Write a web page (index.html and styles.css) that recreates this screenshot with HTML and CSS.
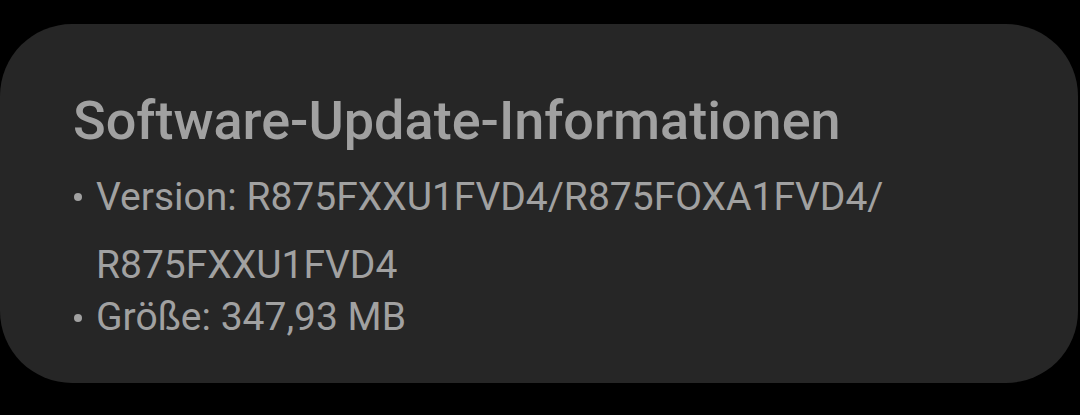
FILE: index.html
```html
<!DOCTYPE html>
<html lang="de">
<head>
  <meta charset="UTF-8">
  <meta name="viewport" content="width=device-width, initial-scale=1.0">
  <link rel="stylesheet" href="styles.css">
  <title>Software-Update</title>
</head>
<body>
  <div class="card">
    <h1 class="title">Software-Update-Informationen</h1>
    <ul class="info">
      <li class="item item-version">Version: R875FXXU1FVD4/R875FOXA1FVD4/<br>R875FXXU1FVD4</li>
      <li class="item item-size">Größe: 347,93 MB</li>
    </ul>
  </div>
</body>
</html>
```

FILE: styles.css
```css
html, body {
  margin: 0;
  background-color: #000;
}

body {
  font-family: Roboto, "Noto Sans", sans-serif;
  color: #a1a1a1;
  padding-top: 24px;
}

.card {
  box-sizing: border-box;
  width: 1078px;
  height: 359px;
  background-color: #262626;
  border-radius: 72px;
  padding: 65px 40px 0 73px;
}

.title {
  margin: 0;
  font-size: 54px;
  font-weight: 500;
  line-height: 64px;
}

.info {
  list-style: none;
  margin: 10px 0 0;
  padding: 0;
}

.item {
  position: relative;
  padding-left: 23px;
  font-size: 39px;
}

.item-version {
  line-height: 68px;
}

.item-size {
  line-height: 37px;
}

.item::before {
  content: "";
  position: absolute;
  left: 1px;
  width: 8px;
  height: 8px;
  border-radius: 50%;
  background-color: #a1a1a1;
}

.item-version::before {
  top: 30px;
}

.item-size::before {
  top: 15px;
}
```
